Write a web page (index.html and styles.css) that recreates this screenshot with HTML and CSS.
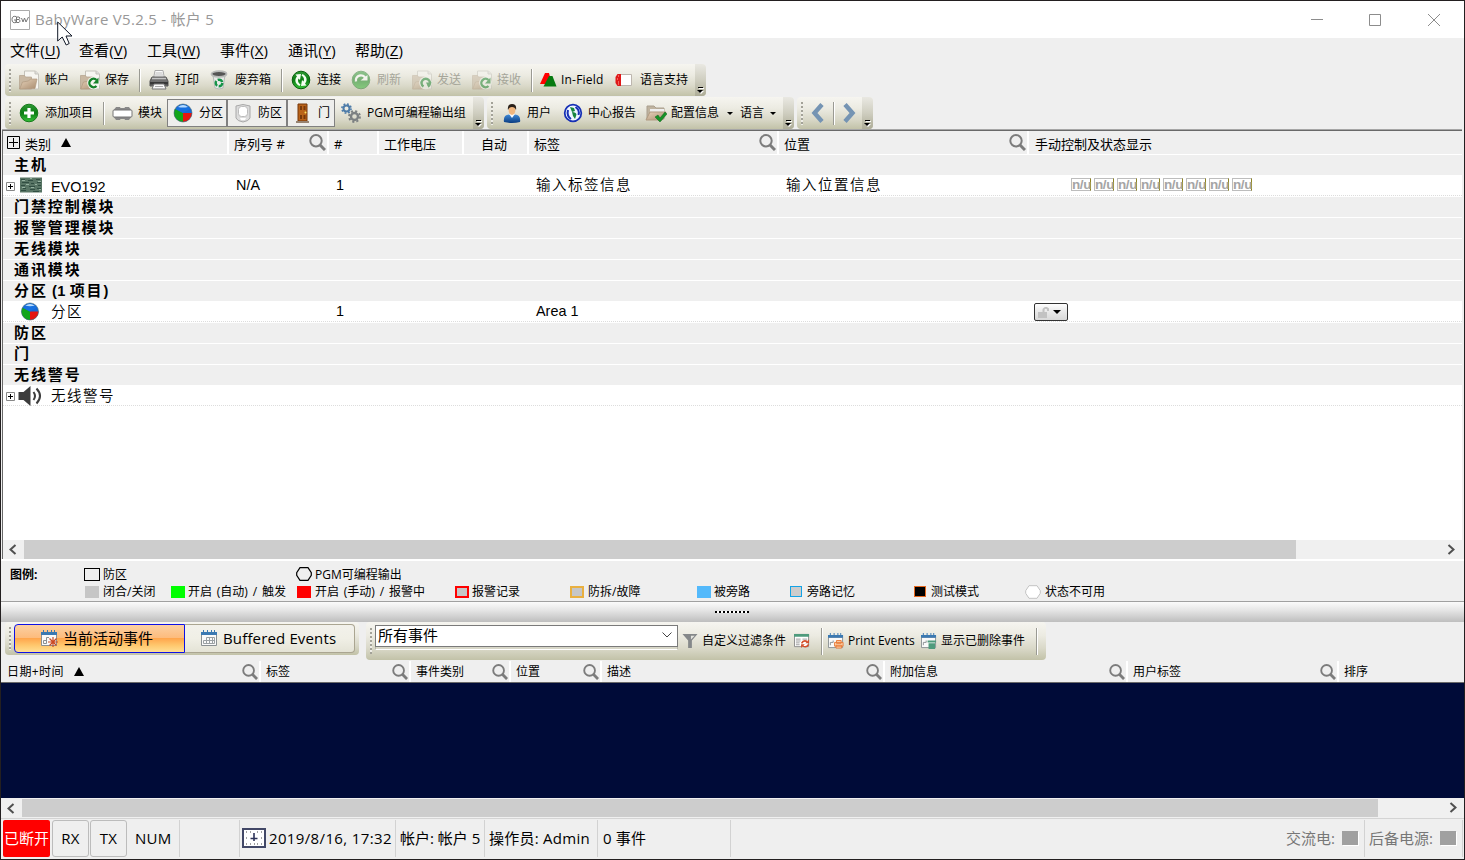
FILE: index.html
```html
<!DOCTYPE html>
<html lang="zh-CN">
<head>
<meta charset="utf-8">
<title>BabyWare V5.2.5</title>
<link rel="stylesheet" href="styles.css">
</head>
<body>
<svg class="defs" width="0" height="0" aria-hidden="true">
  <defs>
    <linearGradient id="gg" x1="0" y1="0" x2="0" y2="1"><stop offset="0" stop-color="#2f9a35"/><stop offset=".5" stop-color="#0b7d12"/><stop offset="1" stop-color="#37c23a"/></linearGradient>
    <linearGradient id="fold" x1="0" y1="0" x2="1" y2="1"><stop offset="0" stop-color="#e6d2bb"/><stop offset="1" stop-color="#a98c6e"/></linearGradient>
    <linearGradient id="user" x1="0" y1="0" x2="0" y2="1"><stop offset="0" stop-color="#3f8ad8"/><stop offset="1" stop-color="#0a3c80"/></linearGradient>
  </defs>
  <symbol id="folder" viewBox="0 0 20 20"><path d="M5.500 1h11l3 3v15h-14z" fill="#f7f6f1" stroke="#c5c3bb"/><path d="M16 1v3h3" fill="#ddd" stroke="#c5c3bb"/><path d="M.5 5.500h5l1 1.500h6v12H.5z" fill="#c9b8a2" stroke="#b3a28c" stroke-width=".7"/><path d="M.7 19l2.800-7 6-1 2-2h6.500l-2 9.500z" fill="url(#fold)" stroke="#b09a80" stroke-width=".7"/></symbol>
  <symbol id="save" viewBox="0 0 20 20"><use href="#folder"/><circle cx="13.500" cy="13" r="6.300" fill="#f4f5f0"/><path d="M16.500 10a4.200 4.200 0 1 0 0 6" fill="none" stroke="#15822a" stroke-width="2.400"/><path d="M18.500 7.500v6h-5.500z" fill="#15822a"/></symbol>
  <symbol id="send" viewBox="0 0 20 20"><use href="#folder"/><circle cx="13.500" cy="13" r="6.300" fill="#f4f5f0"/><path d="M11.500 16.500a4.200 4.200 0 1 1 4.500 0" fill="none" stroke="#15822a" stroke-width="2.400"/><path d="M14 12.500h5.500l-3 5z" fill="#15822a"/></symbol>
  <symbol id="printer" viewBox="0 0 20 20"><path d="M6 .5h8l1.500 8h-11z" fill="#fafafa" stroke="#aaa"/><path d="M6.500 3h7M6 5h8" stroke="#bbb"/><path d="M3 7h14l2 4v5H1v-5z" fill="#707070" stroke="#555"/><path d="M3 8.500h14" stroke="#c4c4c4" stroke-width="1.500"/><path d="M1 12h18v2.500H1z" fill="#383838"/><path d="M5 14h10l2 5H3z" fill="#f8f8f8" stroke="#777"/><path d="M6 16.500h8" stroke="#aaa"/></symbol>
  <symbol id="bin" viewBox="0 0 20 20"><path d="M3 5l2 13q4 2 8 0l2-13z" fill="#e7eae8" stroke="#b4bab6"/><ellipse cx="9" cy="4" rx="7.500" ry="2.800" fill="#555" stroke="#b9bbb9" stroke-width="1.800"/><circle cx="9" cy="13" r="3.300" fill="none" stroke="#169447" stroke-width="2.400" stroke-dasharray="5.400 1.500"/></symbol>
  <symbol id="connect" viewBox="0 0 20 20"><circle cx="10" cy="10" r="8.800" fill="url(#gg)" stroke="#08600d"/><path d="M8.500 16C3.500 13.500 3.500 9 6 6.500L4.500 4.500 10 4 9 10 7.500 8.500C6.500 10.500 7 13 9.500 14.500zM11.500 4c5 2.500 5 7 2.500 9.500l1.500 2L10 16l1-6 1.500 1.500C13.500 9.500 13 7 10.500 5.500z" fill="#f4fff2"/></symbol>
  <symbol id="refresh" viewBox="0 0 20 20"><circle cx="10" cy="10" r="8.800" fill="url(#gg)" stroke="#267a2a"/><path d="M5 11.500a5 5 0 0 1 9.500-3" fill="none" stroke="#fff" stroke-width="2.400"/><path d="M9.500 10.500h7V5z" fill="#fff"/></symbol>
  <symbol id="add" viewBox="0 0 20 20"><circle cx="10" cy="10" r="8.800" fill="url(#gg)" stroke="#167a1a"/><path d="M10 5v10M5 10h10" stroke="#fff" stroke-width="3.200"/></symbol>
  <symbol id="infield" viewBox="0 0 20 20"><path d="M1 14L6 3h4l3 11z" fill="#f00"/><path d="M4.500 16.500L10 6h3.500l4 10.500z" fill="#067a10"/></symbol>
  <symbol id="lang" viewBox="0 0 20 20"><path d="M4.500 4.500h12v11h-12z" fill="#fff" stroke="#bdb6ae"/><path d="M6 4v12H2.500l-2-3V7l2-3z" fill="#e01818"/><path d="M3 6h1M2 9h1M3 12h1M3 14h1" stroke="#ffb0a0"/></symbol>
  <symbol id="module" viewBox="0 0 22 20"><path d="M4 4.500h4v1h5v-1h4l2 3v6l-2 3h-4v-1H8v1H4l-2-3v-6z" fill="#888" stroke="#888"/><rect x="1" y="7" width="19" height="7" rx="1" fill="#fff" stroke="#777"/></symbol>
  <symbol id="pie" viewBox="0 0 20 20"><circle cx="10" cy="10" r="9" fill="#1468d4"/><path d="M10 10L2 6A9 9 0 0 0 10 19z" fill="#12a51a"/><path d="M10 10h9a9 9 0 0 1-9 9z" fill="#e51410"/><path d="M3 6q7-9 14 0l-7 4z" fill="#1670df"/><path d="M5 4q5-4 10 0-5 1-10 0z" fill="#b7dcff"/><circle cx="10" cy="10" r="9" fill="none" stroke="#506f71" stroke-width=".6"/></symbol>
  <symbol id="zone" viewBox="0 0 18 20"><path d="M2 3q7-3 14 0v12q-1 3-7 4-6-1-7-4z" fill="#dcdcdc" stroke="#a8a8a8"/><rect x="4.500" y="3.500" width="9" height="10" rx="3" fill="#fff" stroke="#bbb"/><path d="M6 15h6l-1 2H7z" fill="#fff"/></symbol>
  <symbol id="door" viewBox="0 0 14 20"><path d="M2 1h9v17H2z" fill="#b9631a" stroke="#76390b"/><path d="M4 3h2v4H4zM7.500 3h2v4h-2zM4 12h2v4H4zM7.500 12h2v4h-2z" fill="#78390b"/><path d="M0 18h13v2H0z" fill="#968372"/><circle cx="9.500" cy="9.500" r="1" fill="#ffe35f"/></symbol>
  <symbol id="gears" viewBox="0 0 20 20"><circle cx="5.500" cy="5.500" r="3" fill="none" stroke="#4e7ca9" stroke-width="2"/><circle cx="5.500" cy="5.500" r="4.600" fill="none" stroke="#4e7ca9" stroke-width="1.600" stroke-dasharray="1.800 1.813"/><circle cx="13.500" cy="13.500" r="3.500" fill="none" stroke="#7c8082" stroke-width="2.400"/><circle cx="13.500" cy="13.500" r="5.400" fill="none" stroke="#7c8082" stroke-width="2" stroke-dasharray="2.100 2.141"/></symbol>
  <symbol id="person" viewBox="0 0 18 20"><path d="M1 19q-1-7 5-7.500h6q6 .5 5 7.500-8 2-16 0z" fill="url(#user)"/><path d="M6 11l3 4 3-4z" fill="#f8fbff"/><ellipse cx="9" cy="7" rx="3.400" ry="5" fill="#f1b77f"/><path d="M5 7Q4 1 9 1q5 0 4 6-1-3-4-3T5 7z" fill="#292019"/></symbol>
  <symbol id="globe" viewBox="0 0 20 20"><circle cx="10" cy="10" r="8.300" fill="#eef6ff" stroke="#1730b5" stroke-width="1.800"/><path d="M8 16Q3.500 13 5 7M12.500 4q4.500 3 3 8" fill="none" stroke="#1730b5" stroke-width="2"/><path d="M7 4l4 1 1 3-3 1zM9 9q4 0 4.500 2.500L12 16l-2-3z" fill="#16863e"/></symbol>
  <symbol id="config" viewBox="0 0 22 20"><path d="M2 3h7l2 2h8v11H2z" fill="#bfb39f" stroke="#aa9f8e"/><path d="M5 6h14v6H5z" fill="#eee"/><path d="M1 17l4-8h16l-4 8z" fill="url(#fold)" stroke="#b09a80"/><path d="M10 14l3-2 2 3 5-6 2 2-7 8z" fill="#159327" stroke="#0c6718" stroke-width=".5"/></symbol>
  <symbol id="search" viewBox="0 0 17 17"><circle cx="7" cy="6.800" r="5.700" fill="none" stroke="#7c7c7c" stroke-width="2"/><path d="M11 11l5 5" stroke="#7c7c7c" stroke-width="3"/></symbol>
  <symbol id="plus" viewBox="0 0 9 9"><path d="M.5.500h8v8h-8z" fill="#fff" stroke="#888"/><path d="M2 4.500h5M4.500 2v5" stroke="#000"/></symbol>
  <symbol id="cal" viewBox="0 0 17 17"><path d="M.5 4.500h15v11H.5z" fill="#fafafa" stroke="#8a9093"/><path d="M0 2h16v3H0z" fill="#3b79b2"/><path d="M2.500 0v3M6.500 0v3M10.500 0v3M13.500 0v3" stroke="#3b79b2"/></symbol>
  <symbol id="calgrid" viewBox="0 0 17 17"><use href="#cal"/><path d="M5.500 7.500h8v6h-11v-3h11M5.500 7.500v6M8.500 7.500v6M11.500 7.500v6" fill="none" stroke="#9aa0a3"/></symbol>
  <symbol id="calstar" viewBox="0 0 17 17"><use href="#cal"/><path d="M2.500 13.500v-3h3v-3H8M5.500 10v3.500h-3" fill="none" stroke="#8a9093"/><path d="M12 7v10M7 12h10M8.500 8.500l7 7M15.500 8.500l-7 7" stroke="#cb4a24" stroke-width="1.200"/></symbol>
  <symbol id="calprint" viewBox="0 0 17 17"><use href="#cal"/><path d="M2.500 13v-3h3V8" fill="none" stroke="#8a9093"/><path d="M7 10h9v4H7zM9 8h5v3H9zM8.500 13h6v3h-6z" fill="#fbd3ad" stroke="#ea7b38"/></symbol>
  <symbol id="caldel" viewBox="0 0 17 17"><use href="#cal"/><path d="M2.500 13v-3h3V8" fill="none" stroke="#8a9093"/><path d="M7 8h9v2H7zM8 11h7v6H8z" fill="#4e9b7c"/></symbol>
  <symbol id="filter" viewBox="0 0 16 17"><path d="M0 1h16L10 8v8H6V8z" fill="#85888a"/><path d="M9 3h4L9 7z" fill="#e5e5e0"/></symbol>
  <symbol id="list" viewBox="0 0 17 17"><path d="M.5 1.500h15v13H.5z" fill="#fff" stroke="#8a8a8a"/><path d="M0 1h16v3H0z" fill="#4e9b7c"/><path d="M2 6.500h5M2 8.500h5M2 10.500h4M2 12.500h4M9 6.500h5" stroke="#999"/><path d="M8 11q2-4 6-2M15.500 12q-2 4-6 2" fill="none" stroke="#d44e2a" stroke-width="1.600"/><path d="M16 7v4h-4zM7.500 16v-4h4z" fill="#d44e2a"/></symbol>
</svg>

<div class="window">
  <header class="titlebar">
    <svg class="logo" viewBox="0 0 20 20"><path d="M.5.500h19v19H.5z" fill="#fff" stroke="#aaa"/><path d="M6 6.500Q2 5.500 2 9.500t4 3V10H4M6 7h3q2 1 0 2.500H7m2 0q2.500 1.500 0 3H6.500V7M11.500 8l1.500 4 1.500-4 1.500 4 2.500-5" fill="none" stroke="#777"/></svg>
    <span class="title">BabyWare V5.2.5 - 帐户 5</span>
    <svg class="winbtn" viewBox="0 0 12 12"><path d="M0 5.500h12"/></svg>
    <svg class="winbtn" viewBox="0 0 12 12"><path d="M.5.500h11v11H.5z"/></svg>
    <svg class="winbtn" viewBox="0 0 12 12"><path d="M0 0l12 12M12 0L0 12"/></svg>
    <svg class="cursor" viewBox="0 0 16 25"><path d="M.7 1v19l4.500-4 4 8 3-1.500L9 15h6z" fill="#fff" stroke="#111827"/></svg>
  </header>

  <nav class="menu">
    <span>文件(<u>U</u>)</span><span>查看(<u>V</u>)</span><span>工具(<u>W</u>)</span><span>事件(<u>X</u>)</span><span>通讯(<u>Y</u>)</span><span>帮助(<u>Z</u>)</span>
  </nav>

  <div class="toolbars">
    <div class="bar bar-file">
      <i class="grip"></i>
      <svg class="ic"><use href="#folder"/></svg><span>帐户</span>
      <svg class="ic"><use href="#save"/></svg><span>保存</span>
      <i class="sep"></i>
      <svg class="ic"><use href="#printer"/></svg><span>打印</span>
      <svg class="ic"><use href="#bin"/></svg><span>废弃箱</span>
      <i class="sep"></i>
      <svg class="ic"><use href="#connect"/></svg><span>连接</span>
      <svg class="ic dim"><use href="#refresh"/></svg><span class="off">刷新</span>
      <svg class="ic dim"><use href="#send"/></svg><span class="off">发送</span>
      <svg class="ic dim"><use href="#save"/></svg><span class="off">接收</span>
      <i class="sep"></i>
      <svg class="ic"><use href="#infield"/></svg><span class="lat">In-Field</span>
      <svg class="ic"><use href="#lang"/></svg><span>语言支持</span>
      <i class="cap"></i>
    </div>
    <div class="bar-line">
      <div class="bar bar-items">
        <i class="grip"></i>
        <svg class="ic"><use href="#add"/></svg><span>添加项目</span>
        <i class="sep"></i>
        <svg class="ic wide"><use href="#module"/></svg><span>模块</span>
        <div class="toggle"><svg class="ic"><use href="#pie"/></svg><span>分区</span></div>
        <div class="toggle zone"><svg class="ic"><use href="#zone"/></svg><span>防区</span></div>
        <div class="toggle door"><svg class="ic"><use href="#door"/></svg><span>门</span></div>
        <svg class="ic gear"><use href="#gears"/></svg><span>PGM可编程输出组</span>
        <i class="cap"></i>
      </div>
      <div class="bar bar-user">
        <i class="grip"></i>
        <svg class="ic"><use href="#person"/></svg><span>用户</span>
        <svg class="ic"><use href="#globe"/></svg><span>中心报告</span>
        <svg class="ic wide"><use href="#config"/></svg><span>配置信息</span><i class="caret"></i>
        <span>语言</span><i class="caret"></i>
        <i class="cap"></i>
      </div>
      <div class="bar bar-nav">
        <i class="grip"></i>
        <svg class="arrow" viewBox="0 0 14 20"><path d="M11 1.500L3.500 10l7.500 8.500"/></svg>
        <i class="sep"></i>
        <svg class="arrow" viewBox="0 0 14 20"><path d="M2 1.500L9.500 10 2 18.500"/></svg>
        <i class="cap"></i>
      </div>
    </div>
  </div>

  <main class="tree">
    <div class="cols head">
      <div class="c"><svg class="expall" viewBox="0 0 13 13"><path d="M.5.500h12v12H.5zM2 6.500h9M6.500 2v9" fill="none" stroke="#000"/></svg><span>类别</span><i class="up"></i></div>
      <div class="c"><span>序列号 #</span><svg class="find"><use href="#search"/></svg></div>
      <div class="c"><span>#</span></div>
      <div class="c"><span>工作电压</span></div>
      <div class="c mid"><span>自动</span></div>
      <div class="c"><span>标签</span><svg class="find"><use href="#search"/></svg></div>
      <div class="c"><span>位置</span><svg class="find"><use href="#search"/></svg></div>
      <div class="c last"><span>手动控制及状态显示</span></div>
    </div>
    <div class="group">主机</div>
    <div class="cols item">
      <div class="name"><svg class="exp"><use href="#plus"/></svg><svg class="pic board" viewBox="0 0 26 18"><path d="M2 1h22v15H2z" fill="#587565"/><path d="M3 3h4m3 1h5m3-1h4M4 6h7m2 1h3m3-1h4M3 9h4m4 1h6m3-1h3M5 12h3m4 1h5m2-1h4M3 14h5m7 1h6" stroke="#304e42" stroke-width="1.100"/><path d="M4 4h3m5-2h2m6 3h3M8 8h3m6 0h2M4 11h3m6 0h3m5 2h2" stroke="#95b2a0"/></svg><span>EVO192</span></div>
      <div class="v">N/A</div><div class="v">1</div><div></div><div></div>
      <div class="v song">输入标签信息</div><div class="v song">输入位置信息</div>
      <div class="nus"><b>n/u</b><b>n/u</b><b>n/u</b><b>n/u</b><b>n/u</b><b>n/u</b><b>n/u</b><b>n/u</b></div>
    </div>
    <div class="group">门禁控制模块</div>
    <div class="group">报警管理模块</div>
    <div class="group">无线模块</div>
    <div class="group">通讯模块</div>
    <div class="group">分区<em> (1 </em>项目<em>)</em></div>
    <div class="cols item">
      <div class="name"><i class="exp"></i><svg class="pic"><use href="#pie"/></svg><span class="song">分区</span></div>
      <div></div><div class="v">1</div><div></div><div></div><div class="v">Area 1</div><div></div>
      <div class="ctl"><div class="lockbtn"><svg viewBox="0 0 12 11"><path d="M0 5h9v6H0z" fill="#c2c2c2"/><path d="M5.500 5V2.500Q7.500-.5 10 2v2" fill="none" stroke="#c2c2c2" stroke-width="2"/></svg><i class="caret"></i></div></div>
    </div>
    <div class="group">防区</div>
    <div class="group">门</div>
    <div class="group">无线警号</div>
    <div class="cols item">
      <div class="name"><svg class="exp"><use href="#plus"/></svg><svg class="pic horn" viewBox="0 0 26 20"><path d="M1 6h5l7-6v20l-7-6H1z" fill="#3c3c3c"/><path d="M16 6q3 4 0 8M19 2.500q7 7.500 0 15" fill="none" stroke="#3c3c3c" stroke-width="2"/></svg><span class="song">无线警号</span></div>
    </div>
  </main>
  <div class="scroll scroll-top"><svg viewBox="0 0 8 12"><path d="M6.500 1L1.500 5.500l5 4.500"/></svg><i></i><svg class="r" viewBox="0 0 8 12"><path d="M1.500 1l5 4.500-5 4.500"/></svg></div>

  <section class="legend">
    <div class="lg1"><strong>图例:</strong><i class="box"></i><span>防区</span><svg class="hex" viewBox="0 0 16 14"><path d="M4 .7h8l3.300 5v2.600l-3.300 5H4l-3.300-5V5.700z" fill="none" stroke="#000" stroke-width="1.200"/></svg><span>PGM可编程输出</span></div>
    <div class="lg2">
      <i class="sw closed"></i><span>闭合/关闭</span>
      <i class="sw auto"></i><span class="sp">开启 (自动) / 触发</span>
      <i class="sw manual"></i><span class="sp">开启 (手动) / 报警中</span>
      <i class="sw alarm"></i><span>报警记录</span>
      <i class="sw tamper"></i><span>防拆/故障</span>
      <i class="sw bypass"></i><span>被旁路</span>
      <i class="sw bmem"></i><span>旁路记忆</span>
      <i class="sw test"></i><span>测试模式</span>
      <svg class="hex" viewBox="0 0 16 14"><path d="M4 .7h8l3.300 5v2.600l-3.300 5H4l-3.300-5V5.700z" fill="#fff" stroke="#c3c3c3"/></svg><span>状态不可用</span>
    </div>
  </section>
  <div class="splitter"><i></i></div>

  <div class="eventbars">
    <div class="bar tabs">
      <i class="grip"></i>
      <div class="tab on"><svg><use href="#calstar"/></svg><span>当前活动事件</span></div>
      <div class="tab"><svg><use href="#calgrid"/></svg><span class="buf">Buffered Events</span></div>
    </div>
    <div class="bar filters">
      <i class="grip"></i>
      <div class="combo"><div class="combo-in"><span>所有事件</span><svg viewBox="0 0 10 6"><path d="M.5.500L5 5 9.500.500" fill="none" stroke="#444"/></svg></div></div>
      <svg class="ei"><use href="#filter"/></svg><span>自定义过滤条件</span>
      <svg class="ei"><use href="#list"/></svg>
      <i class="sep"></i>
      <svg class="ei"><use href="#calprint"/></svg><span class="pe">Print Events</span>
      <svg class="ei"><use href="#caldel"/></svg><span>显示已删除事件</span>
      <i class="sep"></i>
    </div>
  </div>
  <div class="evhead">
    <div class="c date"><span>日期+时间</span><i class="up"></i><svg class="find"><use href="#search"/></svg></div>
    <div class="c"><span>标签</span><svg class="find"><use href="#search"/></svg></div>
    <div class="c"><span>事件类别</span><svg class="find"><use href="#search"/></svg></div>
    <div class="c"><span>位置</span><svg class="find"><use href="#search"/></svg></div>
    <div class="c"><span>描述</span><svg class="find"><use href="#search"/></svg></div>
    <div class="c"><span>附加信息</span><svg class="find"><use href="#search"/></svg></div>
    <div class="c"><span>用户标签</span><svg class="find"><use href="#search"/></svg></div>
    <div class="c last"><span>排序</span></div>
  </div>
  <div class="events"></div>
  <div class="scroll scroll-bottom"><svg viewBox="0 0 8 12"><path d="M6.500 1L1.500 5.500l5 4.500"/></svg><i></i><svg class="r" viewBox="0 0 8 12"><path d="M1.500 1l5 4.500-5 4.500"/></svg></div>

  <footer class="status">
    <div class="disc">已断开</div>
    <div class="key">RX</div>
    <div class="key">TX</div>
    <div class="s num">NUM</div>
    <div class="s"></div>
    <div class="s time"><svg viewBox="0 0 24 20"><path d="M1 1h22v18H1z" fill="#fff" stroke="#424867" stroke-width="2"/><path d="M12 5v8M8.500 10.500h7" fill="none" stroke="#2d3359" stroke-width="1.600"/><path d="M4 4h1M8 4h1M15 4h1M19 4h1M4 10h1M19 10h1M4 16h1M8 16h1M12 16h1M15 16h1M19 16h1" stroke="#444"/></svg><span>2019/8/16, 17:32</span></div>
    <div class="s">帐户: 帐户 5</div>
    <div class="s oper">操作员: Admin</div>
    <div class="s zero">0 事件</div>
    <div class="s power ac"><span>交流电:</span><i></i></div>
    <div class="s power"><span>后备电源:</span><i></i></div>
  </footer>
</div>
</body>
</html>
```

FILE: styles.css
```css
* { box-sizing: border-box; }
body { margin: 0; background: #efefef; font-family: "Open Sans", "Noto Sans CJK SC", sans-serif; font-size: 12px; line-height: 16px; color: #000; overflow: hidden; }
i, em { font-style: normal; }
.defs { position: absolute; }
svg { display: block; flex: none; }
.window { width: 1465px; height: 860px; border: 1px solid #231f20; display: flex; flex-direction: column; background: #efefef; white-space: nowrap; }
.window > * { flex-shrink: 0; }

/* Title and menu */
.titlebar { height: 37px; background: #fff; display: flex; align-items: center; padding: 0 24px 0 9px; position: relative; }
.logo { width: 20px; height: 20px; margin-right: 5px; }
.title { font-size: 15px; color: #999; flex: 1; line-height: 20px; letter-spacing: .28px; padding-bottom: 1px; }
.winbtn { width: 12px; height: 12px; margin-left: 46px; fill: none; stroke: #8c8c8c; }
.winbtn + .winbtn { margin-left: 46px; }
.winbtn + .winbtn + .winbtn { margin-left: 47px; }
.cursor { position: absolute; left: 56px; top: 20px; width: 16px; height: 25px; z-index: 2; }
.menu { height: 26px; display: grid; grid-template-columns: 69px 68px 73px 68px 67px 60px; padding-left: 9px; font-size: 15px; line-height: 25px; letter-spacing: .1px; }
.menu u { text-underline-offset: 2px; }

/* Toolbars */
.toolbars { height: 66px; padding-left: 4px; display: flex; flex-direction: column; gap: 1px; }
.bar-line { display: flex; gap: 3px; }
.bar { height: 32px; display: grid; align-items: center; border-radius: 4px; overflow: hidden; background: linear-gradient(#f6f5f0, #ecebe2 35%, #d9d8c8 70%, #c2c2a8); width: max-content; }
.bar-file { grid-template-columns: 14px 26px 35px 25px 34px 10px 26px 35px 25px 46px 10px 26px 34px 26px 35px 25px 35px 25px 34px 8px 22px 54px 25px 55px 11px; }
.bar-items { grid-template-columns: 14px 26px 58px 9px 26px 29px 60px 60px 48px 32px 106px 11px; }
.bar-user { grid-template-columns: 15px 25px 36px 25px 57px 26px 56px 13px 30px 13px 11px; }
.bar-nav { grid-template-columns: 14px 22px 10px 19px 11px; }
.grip { width: 2px; height: 23px; margin-left: 4px; background: repeating-linear-gradient(#a3a298 0 2px, #efeee8 2px 4px); }
.sep { width: 2px; height: 23px; background: #9a9a93; border-right: 1px solid #fff; }
.ic { width: 20px; height: 20px; }
.ic.wide { width: 22px; }
.dim { opacity: .5; }
.off { color: #a5a599; }
.lat { font-size: 12px; letter-spacing: .2px; }
.cap { align-self: stretch; background: linear-gradient(#e9e8e2, #cfcec0 50%, #adac97); position: relative; }
.cap::before { content: ""; position: absolute; left: 3px; top: 23px; width: 5px; height: 1px; background: #000; box-shadow: 1px 1px 0 #fff; }
.cap::after { content: ""; position: absolute; left: 2px; top: 26px; border: 3px solid transparent; border-top-color: #000; border-bottom: 0; filter: drop-shadow(1px 1px 0 #fff); }
.toggle { height: 28px; border: 1px solid #808080; background: #eeeeec; display: grid; grid-template-columns: 26px auto; align-items: center; padding-left: 5px; }
.toggle.zone { grid-template-columns: 25px auto; }
.toggle.door { grid-template-columns: 25px auto; }
.gear { margin-left: 6px; }
.caret { border: 3px solid transparent; border-top: 3px solid #000; border-bottom: 0; width: 6px; height: 3px; }
.arrow { width: 14px; height: 20px; fill: none; stroke: #7594b3; stroke-width: 4.4; }

/* Device tree */
.tree { height: 410px; margin: 0 2px 0 1px; border-top: 1px solid #696969; border-left: 1px solid #696969; background: #fff; box-shadow: 0 -1px 0 #a6a6a6; }
.cols { display: grid; grid-template-columns: 226px 100px 50px 85px 65px 250px 250px 1fr; }
.head { height: 24px; background: #efefef; border-bottom: 1px solid #fff; font-size: 13px; }
.head span { padding-top: 2px; }
.c { display: flex; align-items: center; border-right: 2px solid #fff; padding-left: 5px; }
.c.last { border-right: 0; }
.c.mid { padding-left: 17px; }
.head .last { padding-left: 6px; }
.find { width: 17px; height: 17px; margin-left: auto; margin-right: 1px; }
.up { border: 5px solid transparent; border-bottom: 9px solid #000; border-top: 0; margin-left: 10px; }
.expall { width: 13px; height: 13px; margin: 0 5px 0 -1px; }
.group { height: 20px; margin-bottom: 1px; padding-left: 11px; background: #efefef; font: bold 15px/19px "Liberation Sans", "Noto Sans CJK SC", sans-serif; letter-spacing: 1.9px; }
.group em { font-size: 14.6px; letter-spacing: .2px; }
.item { height: 21px; font: 14.4px/19px "Liberation Sans", "Noto Sans CJK SC", sans-serif; background: linear-gradient(#fff, #fff) 0 20px / 100% 1px no-repeat, repeating-linear-gradient(90deg, #ddd 0 1px, #fff 1px 2px) 0 19px / 100% 1px no-repeat; }
.song { font-size: 14.5px; letter-spacing: 1.5px; font-weight: 350; line-height: 18px; }
.item .name { display: grid; grid-template-columns: 12px 36px auto; height: 20px; align-items: center; }
.name .song { padding-bottom: 1px; }
.exp { width: 9px; height: 9px; margin-left: 3px; margin-bottom: 1px; }
.pic { width: 26px; height: 19px; margin-left: 2px; margin-bottom: 2px; }
.board { margin-left: 3px; margin-bottom: 3px; }
.horn { width: 27px; height: 20px; margin-bottom: 1px; }
.v { padding-left: 7px; }
.nus { display: flex; gap: 3px; padding: 2px 0 0 42px; }
.nus b { width: 20px; height: 13px; border: 1px solid #bdbdbd; border-right: 1px solid #8d8325; color: #a5a5a5; font-size: 13.5px; line-height: 12px; text-align: center; letter-spacing: -.4px; font-weight: bold; }
.ctl { padding: 1px 0 0 5px; }
.lockbtn { width: 34px; height: 18px; border: 1px solid #333; border-radius: 2px; background: linear-gradient(#fff, #ececec 40%, #d8d8d8); display: flex; align-items: center; gap: 3px; padding-left: 3px; }
.lockbtn svg { width: 12px; height: 11px; }
.lockbtn .caret { border-width: 4px 4px 0; width: 8px; height: 4px; }

/* Scrollbars */
.scroll { display: grid; background: #f0f0f0; align-items: center; }
.scroll svg { width: 8px; height: 12px; fill: none; stroke: #505050; stroke-width: 2; margin-left: 6px; }
.scroll .r { margin: 0 7px 0 auto; }
.scroll i { background: #cdcdcd; align-self: stretch; }
.scroll-top { height: 19px; margin: 0 2px 0 1px; border-left: 1px solid #696969; grid-template-columns: 21px 1272px 1fr; }
.scroll-bottom { height: 21px; padding: 1px 0; grid-template-columns: 21px 1356px 1fr; border-bottom: 1px solid #d4d4d4; }
.scroll-bottom svg { margin-top: 1px; }

/* Legend */
.legend { height: 43px; border-top: 2px solid #fff; border-bottom: 1px solid #a0a0a0; padding-top: 5px; }
.lg1, .lg2 { display: grid; align-items: center; height: 17px; }
.lg1 { grid-template-columns: 74px 19px 193px 19px auto; padding-left: 9px; justify-content: start; }
.lg2 { grid-template-columns: 18px 68px 17px 109px 18px 140px 17px 98px 18px 109px 17px 76px 17px 107px 17px 94px 20px auto; padding-left: 84px; justify-content: start; }
.lg2 .sp { word-spacing: 1.7px; }
.box { width: 16px; height: 13px; border: 1px solid #000; margin-bottom: 1px; }
.hex { width: 16px; height: 14px; }
.lg1 .hex { margin-bottom: 1px; }
.sw { width: 14px; height: 12px; }
.closed { background: #c6c6c6; }
.auto { background: #0f0; }
.manual { background: #f00; }
.alarm { background: #c6c6c6; border: 2px solid #f00; }
.tamper { background: #c6c6c6; border: 2px solid #e9b040; }
.bypass { background: #53b9fb; }
.bmem { background: #ccc; border: 1px solid #13a3e6; width: 12px; height: 11px; }
.test { background: #000; border: 1px solid #e56820; width: 12px; height: 11px; }
.splitter { height: 20px; background: linear-gradient(#fbfbfb, #e6e6e6 40%, #bebebe); display: flex; justify-content: center; padding-top: 9px; }
.splitter i { width: 34px; height: 2px; margin-right: 2px; background: repeating-linear-gradient(90deg, #000 0 2px, #fff 2px 4px); }

/* Event toolbars */
.eventbars { height: 39px; padding-left: 4px; display: flex; gap: 7px; }
.tabs { height: 33px; grid-template-columns: 9px 171px 170px 4px; }
.tab { height: 29px; border: 1px solid #aaa591; border-left: 0; border-radius: 0 4px 4px 0; background: linear-gradient(#f2f1eb, #f0efe6 50%, #e4e3d6); display: flex; align-items: center; font-size: 15px; padding-left: 16px; line-height: 20px; }
.tab.on { border: 1px solid #0d10e6; border-radius: 4px 0 0 4px; background: linear-gradient(#fbd0a3, #fdbb7c 48%, #ffa64d 50%, #ffc76d 75%, #ffdf94); padding-left: 26px; }
.tab span { padding-bottom: 2px; }
.buf { letter-spacing: .15px; }
.tab svg { width: 17px; height: 17px; margin-right: 5px; }
.filters { height: 38px; grid-template-columns: 9px 307px 20px 92px 27px 7px 20px 73px 20px 95px 10px; }
.filters .sep { height: 27px; }
.filters .grip { height: 26px; }
.combo { width: 303px; height: 25px; margin-bottom: 8px; border: 1px solid #b5b4a8; background: #d8d7c8; border-bottom-color: #fff; }
.combo-in { margin: -1px; height: 22px; border: 1px solid #7a7a7a; background: #fff; display: flex; align-items: center; justify-content: space-between; font-size: 15px; line-height: 20px; padding: 0 5px 2px 2px; }
.combo-in svg { width: 10px; height: 6px; }
.ei { width: 16px; height: 16px; }
.evhead { height: 22px; border-bottom: 1px solid #696969; display: grid; grid-template-columns: 260px 150px 100px 91px 283px 243px 211px 1fr; }
.evhead .up { margin-left: 10px; }
.evhead .c { padding-left: 5px; }
.evhead .date { padding-left: 6px; }
.date span { letter-spacing: .4px; }
.evhead .find { width: 16px; height: 16px; }
.events { height: 115px; background: #000b38; }

/* Status bar */
.status { height: 40px; display: grid; grid-template-columns: 49px 38px 38px 52px 60px 156px 89px 113px 133px 634px 1fr; grid-template-rows: 37px; padding: 1px 1px 2px 2px; font-size: 15px; line-height: 37px; }
.disc { background: #f00; color: #fff; width: 47px; border-radius: 2px; padding-left: 1px; }
.key { border: 1px solid #bcbcbc; border-radius: 3px; width: 37px; text-align: center; line-height: 35px; letter-spacing: .4px; }
.s { border-right: 1px solid #d2d2d2; padding-left: 4px; }
.num { padding-left: 7px; letter-spacing: .3px; }
.oper { letter-spacing: .25px; }
.zero { padding-left: 5px; letter-spacing: .2px; }
.time { display: flex; align-items: center; padding-left: 2px; letter-spacing: .36px; }
.time svg { width: 24px; height: 20px; margin-right: 3px; margin-bottom: 2px; }
.power { display: flex; align-items: center; color: #777; gap: 7px; }
.power i { width: 16px; height: 14px; background: #a0a0a0; box-shadow: 1px 1px 0 #fff; margin-bottom: 2px; }
.power.ac { justify-content: flex-end; padding-right: 6px; }
```
